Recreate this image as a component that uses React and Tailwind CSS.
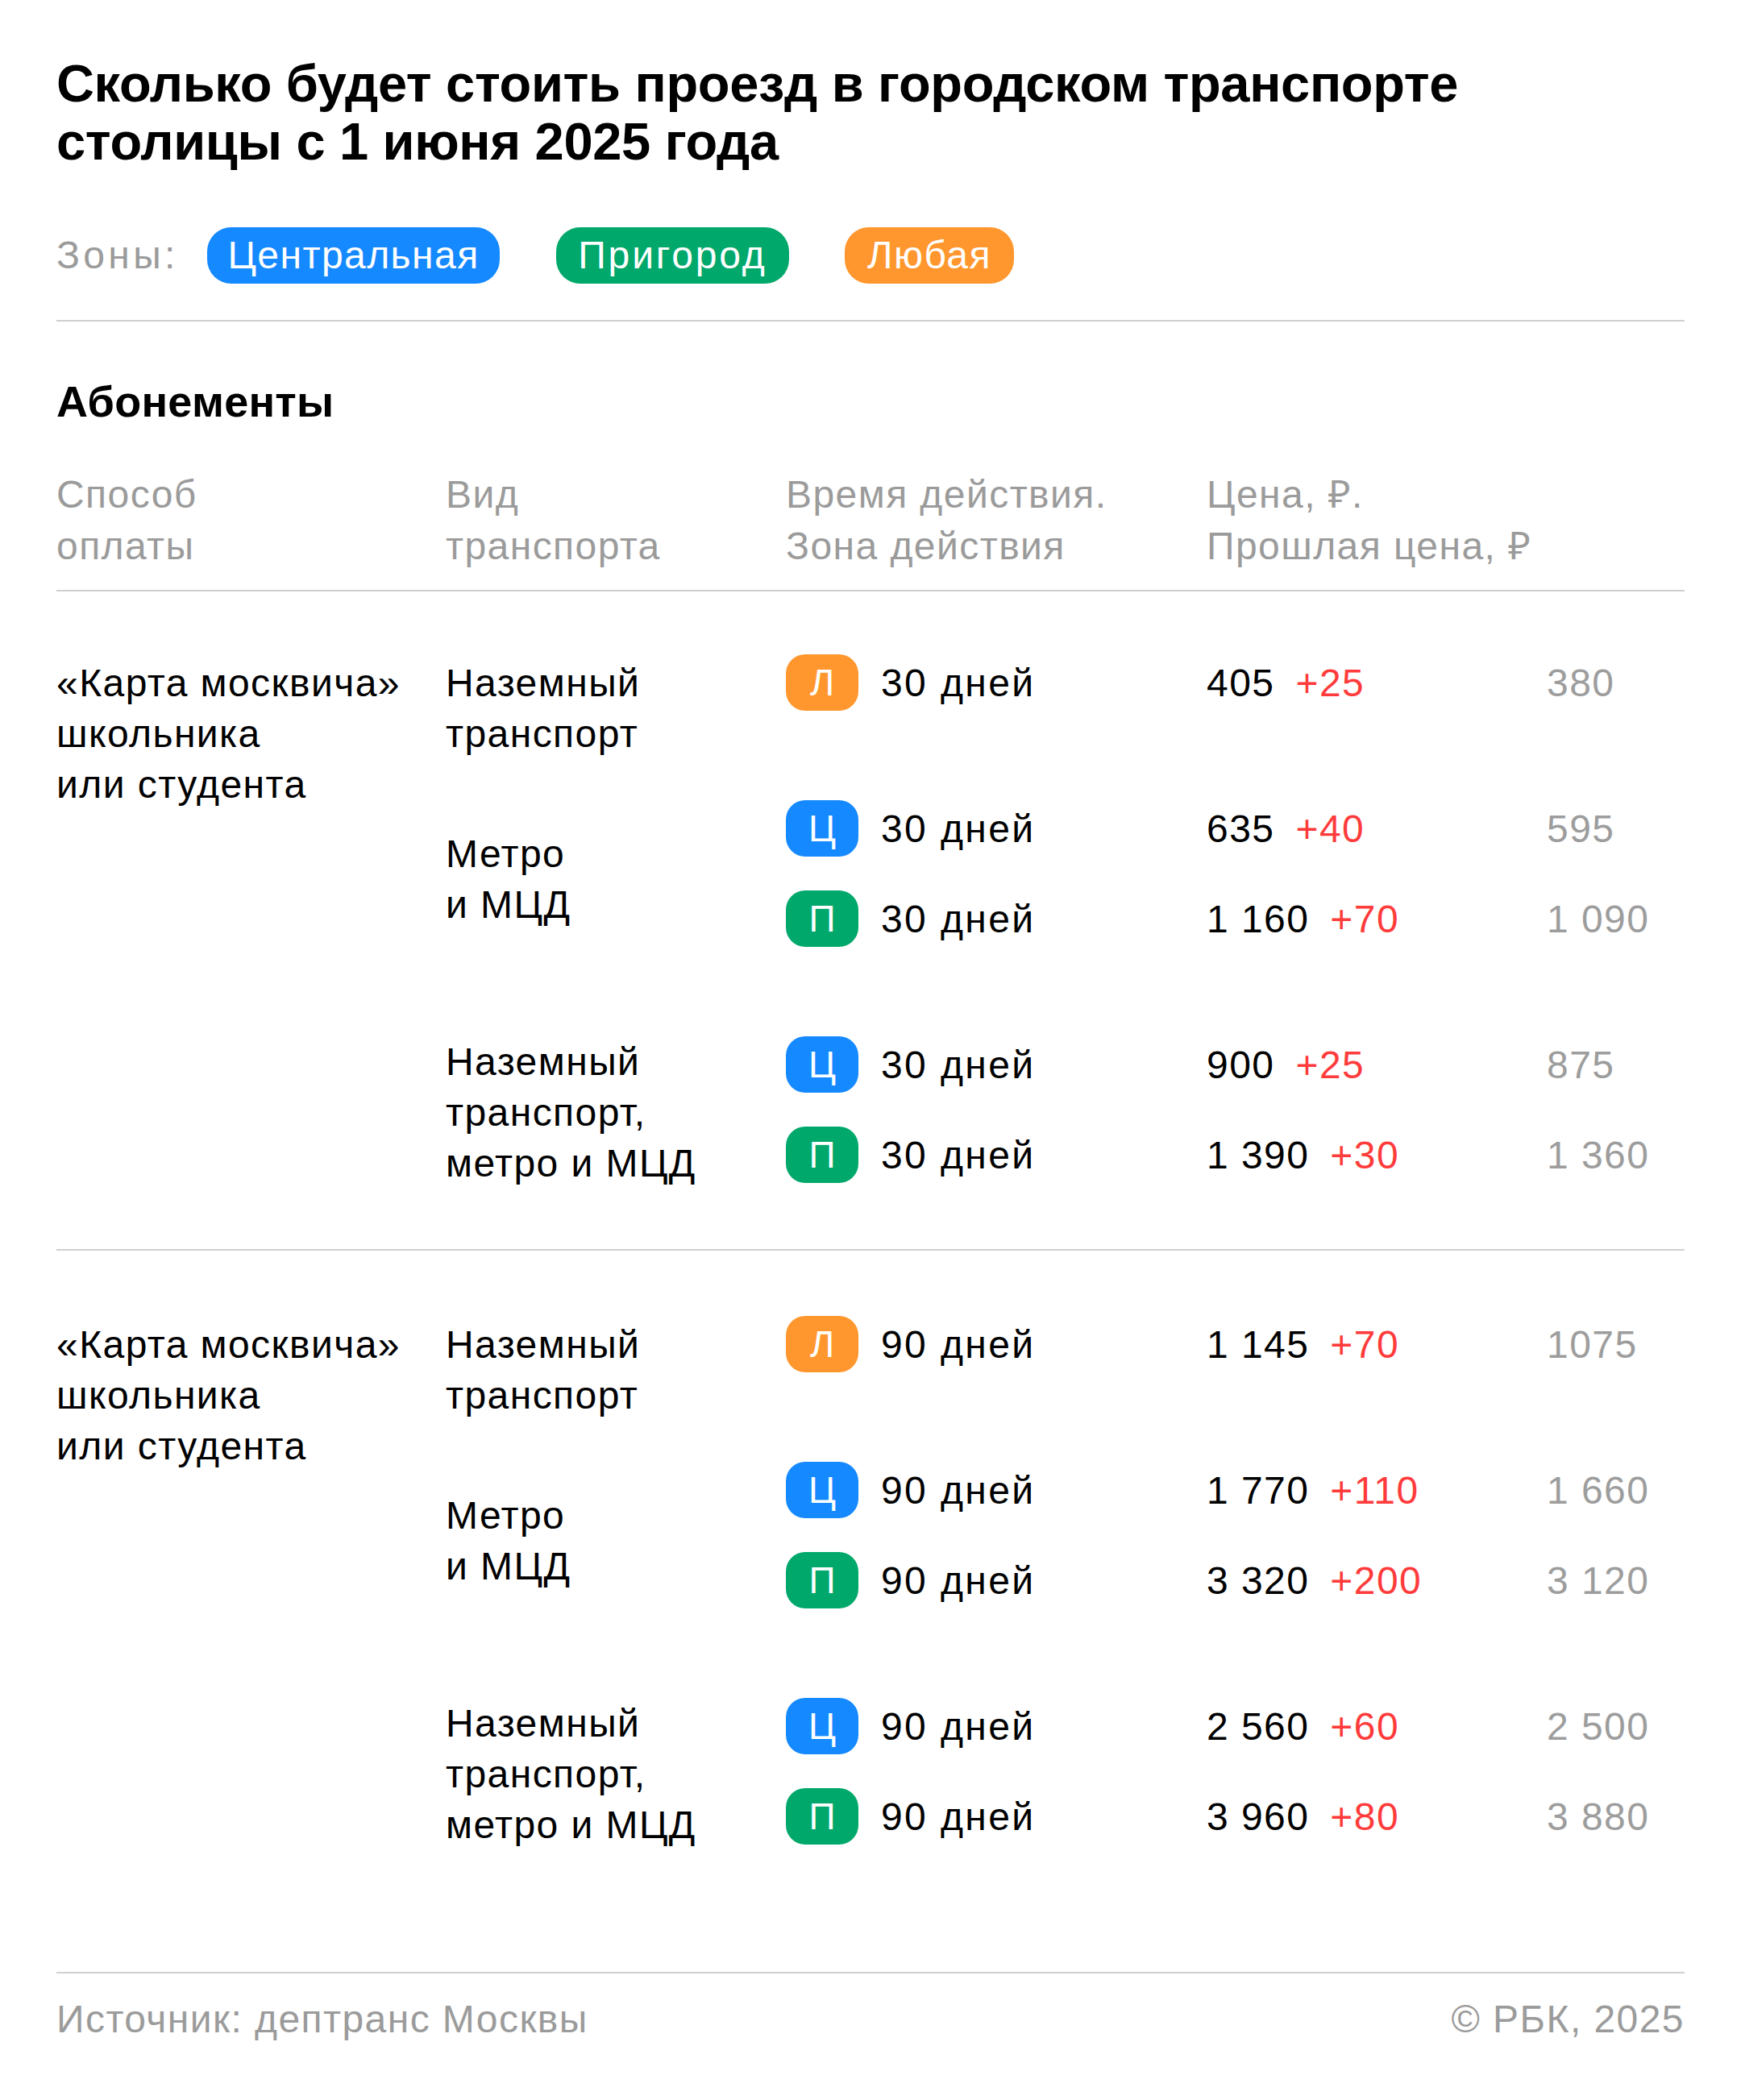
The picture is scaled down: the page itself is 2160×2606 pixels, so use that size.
import React from "react";

const ZONES = {
  L: { ch: "Л", bg: "bg-[#ff972e]" },
  C: { ch: "Ц", bg: "bg-[#1589ff]" },
  P: { ch: "П", bg: "bg-[#00a86b]" },
};

const sections = [
  {
    days: "30 дней",
    groups: [
      {
        label: ["Наземный", "транспорт"],
        first: true,
        rows: [{ z: "L", price: "405", inc: "+25", old: "380" }],
      },
      {
        label: ["Метро", "и МЦД"],
        rows: [
          { z: "C", price: "635", inc: "+40", old: "595" },
          { z: "P", price: "1 160", inc: "+70", old: "1 090" },
        ],
      },
      {
        label: ["Наземный", "транспорт,", "метро и МЦД"],
        rows: [
          { z: "C", price: "900", inc: "+25", old: "875" },
          { z: "P", price: "1 390", inc: "+30", old: "1 360" },
        ],
      },
    ],
  },
  {
    days: "90 дней",
    groups: [
      {
        label: ["Наземный", "транспорт"],
        first: true,
        rows: [{ z: "L", price: "1 145", inc: "+70", old: "1075" }],
      },
      {
        label: ["Метро", "и МЦД"],
        rows: [
          { z: "C", price: "1 770", inc: "+110", old: "1 660" },
          { z: "P", price: "3 320", inc: "+200", old: "3 120" },
        ],
      },
      {
        label: ["Наземный", "транспорт,", "метро и МЦД"],
        rows: [
          { z: "C", price: "2 560", inc: "+60", old: "2 500" },
          { z: "P", price: "3 960", inc: "+80", old: "3 880" },
        ],
      },
    ],
  },
];

function Row({ r, days }) {
  const z = ZONES[r.z];
  return (
    <div className="flex items-center h-[70px]">
      <div className="w-[522px] flex items-center gap-[28px]">
        <div
          className={`${z.bg} w-[90px] h-[70px] rounded-[24px] flex items-center justify-center text-white text-[46px] leading-none tracking-normal`}
        >
          {z.ch}
        </div>
        <span className="tracking-[0.05em]">{days}</span>
      </div>
      <div className="w-[422px] flex items-center gap-[26px]">
        <span>{r.price}</span>
        <span className="text-[#ff3b3b]">{r.inc}</span>
      </div>
      <div className="text-[#9d9d9d]">{r.old}</div>
    </div>
  );
}

function Group({ g, days, idx }) {
  const mt = idx === 0 ? "" : idx === 1 ? "mt-[51px]" : "mt-[111px]";
  const lp =
    idx === 0 ? "mt-[4px]" : idx === 1 ? "pt-[14px] -my-[30px]" : "pt-[6px] -my-[30px]";
  return (
    <div className={`flex ${g.first ? "items-start" : "items-center"} ${mt}`}>
      <div className={`w-[422px] ${lp}`}>
        {g.label.map((l, i) => (
          <div key={i}>{l}</div>
        ))}
      </div>
      <div className="flex flex-col gap-[42px]">
        {g.rows.map((r, i) => (
          <Row key={i} r={r} days={days} />
        ))}
      </div>
    </div>
  );
}

function Section({ s, last }) {
  return (
    <div
      className={`flex ${last ? "pt-[81px] pb-[158px]" : "pt-[78px] pb-[82px] border-b-2 border-[#d0d0d0]"}`}
    >
      <div className="w-[483px] mt-[4px]">
        <div>«Карта москвича»</div>
        <div>школьника</div>
        <div>или студента</div>
      </div>
      <div className="flex flex-col">
        {s.groups.map((g, i) => (
          <Group key={i} g={g} days={s.days} idx={i} />
        ))}
      </div>
    </div>
  );
}

export default function App() {
  return (
    <div className="w-[2160px] min-h-[2606px] bg-white px-[70px] pt-[68px] pb-[71px] font-['Liberation_Sans','Noto_Sans',sans-serif] text-black">
      <h1 className="text-[65px] leading-[72px] font-bold tracking-[-0.005em]">
        Сколько будет стоить проезд в городском транспорте
        <br />
        столицы с 1 июня 2025 года
      </h1>

      <div className="mt-[70px] flex items-center h-[70px] text-[48px] tracking-[0.03em]">
        <span className="text-[#9b9b9b] w-[151px] tracking-[0.09em]">Зоны:</span>
        <span className="ml-[36px] w-[363px] bg-[#1589ff] text-white h-[70px] rounded-[30px] flex items-center justify-center">
          Центральная
        </span>
        <span className="ml-[70px] w-[289px] bg-[#00a86b] text-white h-[70px] rounded-[30px] flex items-center justify-center tracking-[0.06em]">
          Пригород
        </span>
        <span className="ml-[69px] w-[210px] bg-[#ff972e] text-white h-[70px] rounded-[30px] flex items-center justify-center">
          Любая
        </span>
      </div>

      <div className="mt-[45px] border-t-2 border-[#d0d0d0]" />

      <h2 className="mt-[69px] text-[54px] leading-[60px] font-bold tracking-[0.005em]">
        Абонементы
      </h2>

      <div className="mt-[54px] flex text-[48px] leading-[64px] tracking-[0.03em] text-[#9b9b9b] pb-[22px] border-b-2 border-[#d0d0d0]">
        <div className="w-[483px]">
          <div>Способ</div>
          <div>оплаты</div>
        </div>
        <div className="w-[422px]">
          <div>Вид</div>
          <div>транспорта</div>
        </div>
        <div className="w-[522px]">
          <div>Время действия.</div>
          <div>Зона действия</div>
        </div>
        <div>
          <div>Цена, ₽.</div>
          <div>Прошлая цена, ₽</div>
        </div>
      </div>

      <div className="text-[48px] leading-[63px] tracking-[0.03em]">
        {sections.map((s, i) => (
          <Section key={i} s={s} last={i === sections.length - 1} />
        ))}
      </div>

      <div className="border-t-2 border-[#d0d0d0] pt-[26px] flex justify-between text-[48px] leading-[62px] tracking-[0.03em] text-[#9b9b9b]">
        <span>Источник: дептранс Москвы</span>
        <span>© РБК, 2025</span>
      </div>
    </div>
  );
}
